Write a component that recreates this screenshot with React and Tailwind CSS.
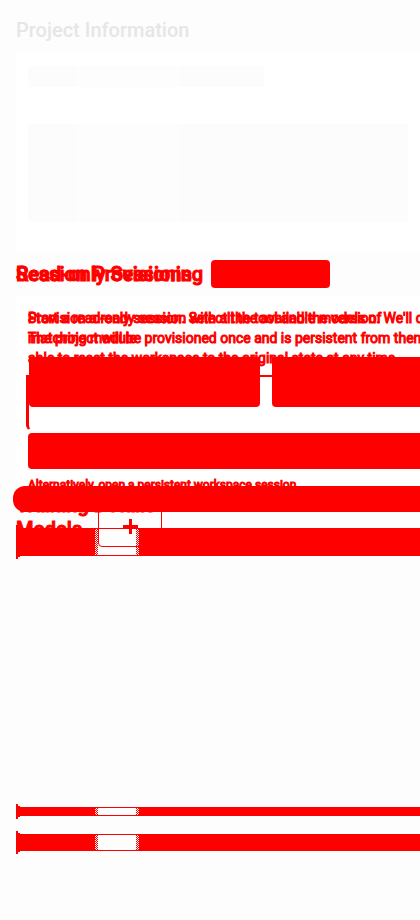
import React from "react";

function Line({ a, b }) {
  return (
    <span className="grid h-5 whitespace-nowrap">
      <span className="col-start-1 row-start-1">{a}</span>
      {b && <span className="col-start-1 row-start-1">{b}</span>}
    </span>
  );
}

function Checker({ id }) {
  return (
    <svg className="h-full w-[3px]" aria-hidden="true">
      <pattern id={id} width="2" height="2" patternUnits="userSpaceOnUse">
        <path d="M0 0h1v1H0zM1 1h1v1H1z" fill="#ff0000" shapeRendering="crispEdges" />
      </pattern>
      <rect width="3" height="100%" fill={`url(#${id})`} />
    </svg>
  );
}

function Stripe({ className, id }) {
  return (
    <div className={`relative flex ${className}`}>
      <div className="w-[79px] bg-[#ff0000]" />
      <div className="flex w-11 justify-between border-y border-[#ff0000] bg-[#fdfdfd]">
        <Checker id={`${id}-start`} />
        <Checker id={`${id}-end`} />
      </div>
      <div className="flex-1 bg-[#ff0000]" />
      <i className="absolute -inset-y-[3px] left-0 w-0.5 bg-[#ff0000]" />
      <i className="absolute -inset-y-px left-0 w-1 bg-[#ff0000]" />
    </div>
  );
}

export default function App() {
  return (
    <main className="h-screen overflow-hidden bg-[#fdfdfd] pl-4 font-['Roboto',sans-serif] text-[#ff0000]">
      <h2 className="pt-4 text-xl leading-7 font-medium text-[#e6e6e6]">Project Information</h2>
      <section className="mt-2 h-[200px] rounded-l-md bg-white pt-3.5 pl-3">
        <div className="flex h-[21px] w-[236px]">
          <div className="w-12 bg-[#fcfcfc]" />
          <div className="w-[104px] bg-[#fdfdfd]" />
          <div className="flex-1 bg-[#fcfcfc]" />
        </div>
        <div className="mt-[37px] mr-3 flex h-[98px]">
          <div className="w-12 bg-[#fcfcfc]" />
          <div className="w-[104px] bg-[#fdfdfd]" />
          <div className="flex-1 bg-[#fcfcfc]" />
        </div>
      </section>

      <header className="mt-2 flex h-7 items-center gap-2">
        <h2 className="grid text-xl leading-7 font-medium whitespace-nowrap [-webkit-text-stroke:1px_#ff0000]">
          <span className="col-start-1 row-start-1">Session Provisioning</span>
          <span className="col-start-1 row-start-1">Read-only Sessions</span>
        </h2>
        <div className="h-7 w-[119px] rounded-sm bg-[#ff0000]" />
      </header>

      <section className="relative mt-2 rounded-l-md bg-white pt-3 pl-3">
        <p className="h-[49px] text-sm leading-5 [-webkit-text-stroke:1px_#ff0000]">
          <Line a="Start a read-only session. Select the tool and the version. We'll choose" b="Provision a ready session with all the available models of" />
          <Line a="The project will be provisioned once and is persistent from then" b="matching module" />
          <Line a="able to reset the workspace to the original state at any time." />
        </p>
        <div className="relative -ml-0.5 h-[74px]">
          <div className="absolute top-[18px] bottom-0 left-0 right-0 rounded-bl-md border-t-2 border-b-2 border-l-[3px] border-[#ff0000] border-b-transparent" />
          <div className="relative flex h-[50px] gap-3 pl-[3px]">
            <div className="w-[231px] rounded-b-sm bg-[#ff0000]" />
            <div className="flex-1 rounded-bl-sm bg-[#ff0000]" />
          </div>
        </div>
        <div className="mt-0.5 h-9 rounded-l-sm bg-[#ff0000]" />
        <p className="mt-2 text-xs leading-4 [-webkit-text-stroke:1px_#ff0000]">Alternatively, open a persistent workspace session.</p>
      </section>

      <section className="relative">
        <h2 className="w-40 text-xl leading-6 font-medium [-webkit-text-stroke:1px_#ff0000]">Training Details Models</h2>
        <Stripe className="-mt-[13px] h-7" id="head" />
        <div className="absolute -left-[3px] right-0 -top-[7px] h-[26px] rounded-l-xl bg-[#ff0000]" />
        <button aria-label="Add model" className="absolute left-[82px] top-3 flex h-[42px] w-16 items-center justify-center rounded border border-[#ff0000]">
          <svg width="15" height="15" viewBox="0 0 15 15" aria-hidden="true" shapeRendering="crispEdges">
            <path d="M0 6h15v3H0zM6 0h3v15H6z" fill="#ff0000" />
          </svg>
        </button>
      </section>
      <div className="h-[251px]" />
      <Stripe className="h-[9px]" id="first" />
      <Stripe className="mt-[18px] h-[17px]" id="second" />
    </main>
  );
}
